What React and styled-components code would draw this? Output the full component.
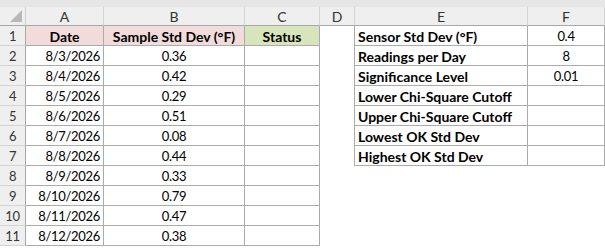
import styled, { createGlobalStyle } from 'styled-components';

const GlobalStyle = createGlobalStyle`
  html, body {
    margin: 0;
    padding: 0;
    background: #ffffff;
    overflow: hidden;
  }
  body {
    font-family: Lato, "Liberation Sans", sans-serif;
    font-size: 13px;
    color: #000;
  }
`;

const Strip = styled.div`
  height: 7px;
  background: #e6e6e6;
`;

const Sheet = styled.div`
  display: grid;
  grid-template-columns: 26px 78px 141px 75px 35px 173px 77px;
  grid-template-rows: 19px repeat(11, 20px);
  width: 605px;
`;

const Corner = styled.div`
  position: relative;
  background: #efefef;
  border-right: 1px solid #d0d0d0;
  border-bottom: 1px solid #a8a8a8;
  box-sizing: border-box;

  &::after {
    content: '';
    position: absolute;
    right: 3px;
    bottom: 3px;
    width: 0;
    height: 0;
    border-left: 12px solid transparent;
    border-bottom: 12px solid #b8b8b8;
  }
`;

const ColHead = styled.div`
  background: #efefef;
  border-right: 1px solid #d4d4d4;
  border-bottom: 1px solid #a8a8a8;
  box-sizing: border-box;
  display: flex;
  align-items: center;
  justify-content: center;
  color: #333;
  font-size: 14px;
  padding-top: 1px;
`;

const RowHead = styled.div`
  background: #efefef;
  border-right: 1px solid #a8a8a8;
  border-bottom: 1px solid #d4d4d4;
  box-sizing: border-box;
  display: flex;
  align-items: center;
  justify-content: center;
  color: #333;
  letter-spacing: -0.3px;
`;

const Cell = styled.div`
  box-sizing: border-box;
  display: flex;
  align-items: center;
  justify-content: ${(p) => (p.$align === 'right' ? 'flex-end' : p.$align === 'left' ? 'flex-start' : 'center')};
  padding: 1px 3px 0 3px;
  white-space: nowrap;
  overflow: hidden;
  background: ${(p) => p.$bg || 'transparent'};
  font-weight: ${(p) => (p.$bold ? 700 : 400)};
  font-size: ${(p) => (p.$bold ? '14px' : '13px')};
  letter-spacing: ${(p) => (p.$bold ? '0' : '-0.3px')};
  border-right: ${(p) => (p.$boxed || p.$edge ? '1px solid #ababab' : 'none')};
  border-bottom: ${(p) => (p.$boxed ? '1px solid #ababab' : 'none')};
`;

const samples = [
  ['8/3/2026', '0.36'],
  ['8/4/2026', '0.42'],
  ['8/5/2026', '0.29'],
  ['8/6/2026', '0.51'],
  ['8/7/2026', '0.08'],
  ['8/8/2026', '0.44'],
  ['8/9/2026', '0.33'],
  ['8/10/2026', '0.79'],
  ['8/11/2026', '0.47'],
  ['8/12/2026', '0.38'],
];

const params = [
  ['Sensor Std Dev (°F)', '0.4'],
  ['Readings per Day', '8'],
  ['Significance Level', '0.01'],
  ['Lower Chi-Square Cutoff', ''],
  ['Upper Chi-Square Cutoff', ''],
  ['Lowest OK Std Dev', ''],
  ['Highest OK Std Dev', ''],
];

export default function App() {
  const cells = [];
  for (let r = 0; r < 11; r++) {
    const param = params[r];
    cells.push(<RowHead key={`h${r}`}>{r + 1}</RowHead>);
    if (r === 0) {
      cells.push(
        <Cell key="a0" $boxed $bold $bg="#f2dcdb">Date</Cell>,
        <Cell key="b0" $boxed $bold $bg="#f2dcdb">Sample Std Dev (°F)</Cell>,
        <Cell key="c0" $boxed $bold $bg="#d8e4bc">Status</Cell>
      );
    } else {
      cells.push(
        <Cell key={`a${r}`} $boxed $align="right">{samples[r - 1][0]}</Cell>,
        <Cell key={`b${r}`} $boxed>{samples[r - 1][1]}</Cell>,
        <Cell key={`c${r}`} $boxed />
      );
    }
    cells.push(<Cell key={`d${r}`} $edge={!!param} />);
    if (param) {
      cells.push(
        <Cell key={`e${r}`} $boxed $bold $align="left">{param[0]}</Cell>,
        <Cell key={`f${r}`} $boxed>{param[1]}</Cell>
      );
    } else {
      cells.push(<Cell key={`e${r}`} />, <Cell key={`f${r}`} />);
    }
  }

  return (
    <>
      <GlobalStyle />
      <Strip />
      <Sheet>
        <Corner />
        {['A', 'B', 'C', 'D', 'E', 'F'].map((l) => (
          <ColHead key={l}>{l}</ColHead>
        ))}
        {cells}
      </Sheet>
    </>
  );
}
